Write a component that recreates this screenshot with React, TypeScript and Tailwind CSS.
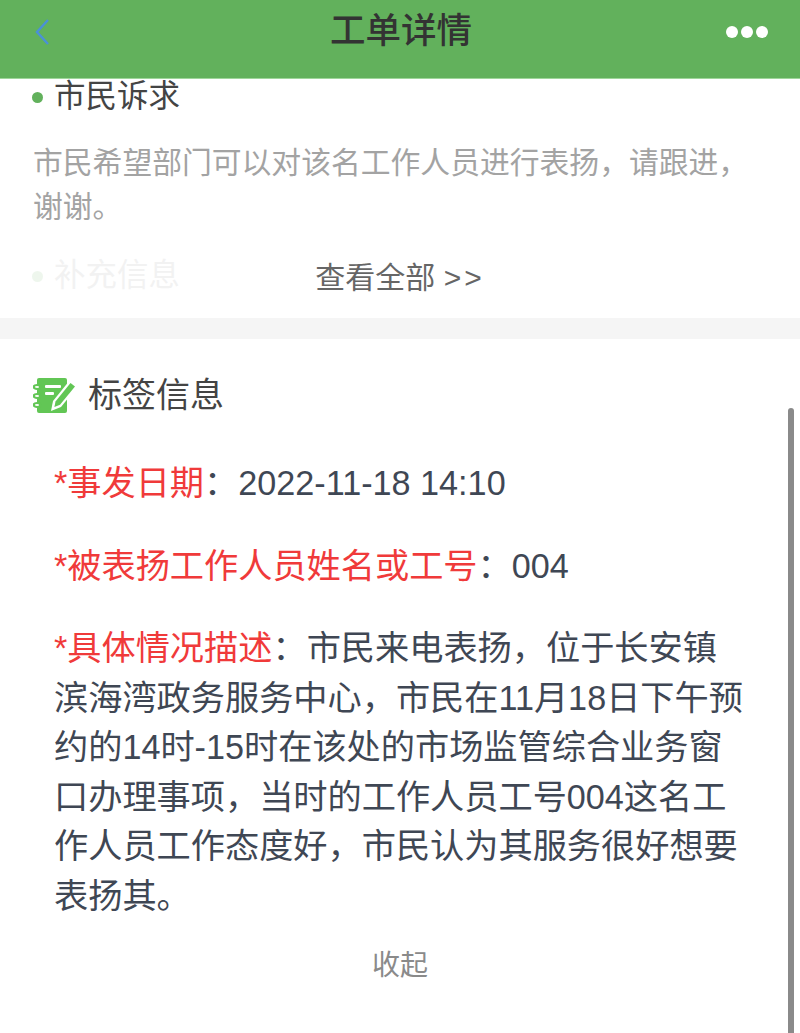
import React from 'react';

const FONT = "font-['Liberation_Sans','Noto_Sans_CJK_SC',sans-serif]";

function NoteIcon() {
  return (
    <svg width="46" height="36" viewBox="0 0 46 36" className="shrink-0">
      <path d="M4 3a2 2 0 0 1 2-2h26a2 2 0 0 1 2 2v31a2 2 0 0 1-2 2H6a2 2 0 0 1-2-2z" fill="#62c655" />
      <g fill="#fff" stroke="#62c655" strokeWidth="2.2">
        <ellipse cx="4" cy="10" rx="3.2" ry="2" />
        <ellipse cx="4" cy="19" rx="3.2" ry="2" />
        <ellipse cx="4" cy="28" rx="3.2" ry="2" />
      </g>
      <rect x="12" y="8" width="16" height="3" rx="1" fill="#fff" />
      <rect x="12" y="15" width="9" height="3" rx="1" fill="#fff" />
      <path d="M37 3l8 6-17 21-10 4 2-10z" fill="#fff" />
      <path d="M37.5 6l4.5 3.4-15 18.4-5.6 2.2 1.1-5.6z" fill="#62c655" />
    </svg>
  );
}

export default function App() {
  return (
    <div className={`relative h-[1033px] w-[800px] overflow-hidden bg-white ${FONT}`}>
      <header className="grid h-[79px] grid-cols-[1fr_auto_1fr] items-center border-b border-[#9ed69a] bg-[#62b15c] pb-[15px] pl-[34px] pr-[32px]">
        <svg width="16" height="28" viewBox="0 0 16 28" fill="none">
          <path d="M14 2L3 14l11 12" stroke="#4a90d9" strokeWidth="2.4" />
        </svg>
        <h1 className="text-[35.5px] font-medium leading-none text-[#333]">工单详情</h1>
        <div className="flex justify-end gap-[3px]">
          <span className="h-[12px] w-[12px] rounded-full bg-white" />
          <span className="h-[12px] w-[12px] rounded-full bg-white" />
          <span className="h-[12px] w-[12px] rounded-full bg-white" />
        </div>
      </header>

      <section className="relative h-[239px] pl-[32px] pr-[50px]">
        <div className="flex h-[36px] items-center gap-[11px]">
          <span className="h-[11px] w-[11px] rounded-full bg-[#62b15c]" />
          <span className="text-[31.5px] leading-none text-[#444]">市民诉求</span>
        </div>
        <p className="mt-[26px] pl-px text-[29.8px] leading-[44px] text-[#a3a3a3]">
          市民希望部门可以对该名工作人员进行表扬，请跟进，谢谢。
        </p>
        <div className="mt-[29px] flex h-[36px] items-center gap-[11px] opacity-10">
          <span className="h-[11px] w-[11px] rounded-full bg-[#62b15c]" />
          <span className="text-[31.5px] leading-none text-[#888]">补充信息</span>
        </div>
        <div className="absolute left-0 right-0 top-[179px] text-center text-[30px] leading-[40px] text-[#666]">
          查看全部 <span className="font-light tracking-[3px]">&gt;&gt;</span>
        </div>
      </section>

      <div className="h-[21px] bg-[#f5f5f5]" />

      <section className="px-[33px] pt-[34px]">
        <div className="flex items-center gap-[9px]">
          <NoteIcon />
          <h2 className="text-[34px] leading-[44px] text-[#444]">标签信息</h2>
        </div>
        <div className="mt-[42px] pl-[21px] pr-[20px] text-[34.2px] leading-[49.5px] text-[#3f4754]">
          <p>
            <span className="text-[#f03a3a]">*事发日期</span>：2022-11-18 14:10
          </p>
          <p className="mt-[33px]">
            <span className="text-[#f03a3a]">*被表扬工作人员姓名或工号</span>：004
          </p>
          <p className="mt-[33px]">
            <span className="text-[#f03a3a]">*具体情况描述</span>
            ：市民来电表扬，位于长安镇滨海湾政务服务中心，市民在11月18日下午预约的14时-15时在该处的市场监管综合业务窗口办理事项，当时的工作人员工号004这名工作人员工作态度好，市民认为其服务很好想要表扬其。
          </p>
        </div>
        <div className="mt-[25px] text-center text-[28px] leading-[40px] text-[#8a8a8a]">收起</div>
      </section>

      {/* scrollbar sits over the content */}
      <div className="absolute bottom-0 right-[6px] top-[408px] w-[6px] rounded-t-full bg-[#8a8a8a]" />
    </div>
  );
}
